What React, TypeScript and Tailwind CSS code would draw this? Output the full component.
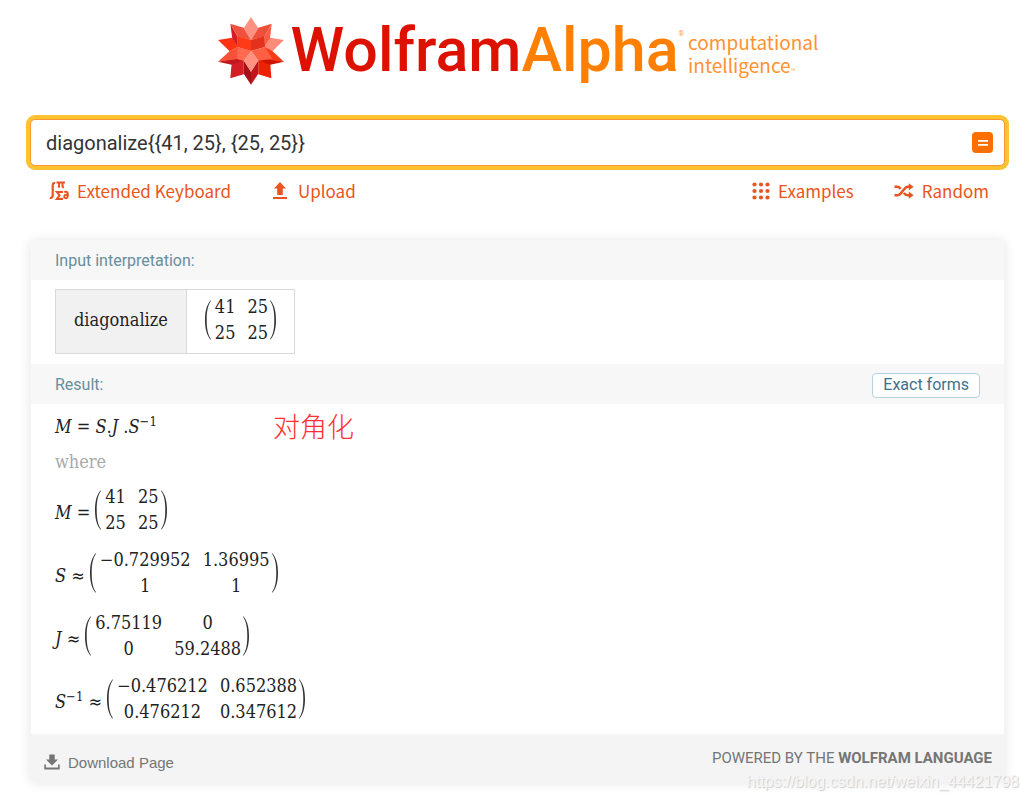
import React, { useState } from 'react';

interface MatrixProps {
  rows: string[][];
}

const Paren: React.FC<{ flip?: boolean }> = ({ flip }) => (
  <svg viewBox="0 0 6 40" className="w-1.5 h-10 shrink-0" fill="#333" aria-hidden="true">
    <path
      d={
        flip
          ? 'M0.2 0.3 C4 4 6 11 6 20 C6 29 4 36 0.2 39.7 L0 39.2 C3 35 4.3 29 4.3 20 C4.3 11 3 5 0 0.8 Z'
          : 'M5.8 0.3 C2 4 0 11 0 20 C0 29 2 36 5.8 39.7 L6 39.2 C3 35 1.7 29 1.7 20 C1.7 11 3 5 6 0.8 Z'
      }
    />
  </svg>
);

const Matrix: React.FC<MatrixProps> = ({ rows }) => (
  <span className="flex items-center">
    <Paren />
    <table className="text-[18px] leading-[26px] text-[#222]">
      <tbody>
        {rows.map((row, i) => (
          <tr key={i}>
            {row.map((cell, j) => (
              <td key={j} className={`p-0 text-center ${j === 0 ? 'pl-1 pr-1.5' : 'pl-1.5 pr-0.5'}`}>
                {cell}
              </td>
            ))}
          </tr>
        ))}
      </tbody>
    </table>
    <Paren flip />
  </span>
);

const Spikey = () => (
  <svg viewBox="18 15 204 207" className="w-[68px] h-[69px] shrink-0" aria-hidden="true">
    <path fill="#ff3311" d="M21 87 L63 80 L80 108 L56 121 Z" />
    <path fill="#ff8c7a" d="M219 87 L177 80 L160 108 L184 121 Z" />
    <path fill="#d51d26" d="M58 38 L80 77 L80 108 L64 84 Z" />
    <path fill="#f0523f" d="M58 38 L98 50 L120 86 L80 77 Z" />
    <path fill="#ff5c43" d="M182 38 L160 77 L160 108 L177 82 Z" />
    <path fill="#ef503c" d="M182 38 L142 50 L120 86 L160 77 Z" />
    <path fill="#ff9180" d="M120 18 L142 52 L120 88 L98 52 Z" />
    <path fill="#ff3b17" d="M80 76 L120 86 L120 120 L78 108 Z" />
    <path fill="#e5321e" d="M160 76 L120 86 L120 120 L162 108 Z" />
    <path fill="#d51d26" d="M58 202 L62 158 L98 145 L98 190 Z" />
    <path fill="#ec2204" d="M181 202 L178 158 L142 145 L142 190 Z" />
    <path fill="#c0181e" d="M21 152 L80 140 L98 148 L62 161 Z" />
    <path fill="#cf1406" d="M219 152 L160 140 L142 148 L178 161 Z" />
    <path fill="#fa5238" d="M21 152 L56 120 L80 108 L120 120 L98 149 L80 144 Z" />
    <path fill="#ff6a50" d="M80 108 L120 120 L98 149 L78 144 Z" />
    <path fill="#f53b18" d="M219 152 L184 120 L162 108 L160 144 Z" />
    <path fill="#ff6043" d="M162 108 L120 120 L142 149 L184 143 Z" />
    <path fill="#a81018" d="M98 148 L120 182 L120 221 L98 188 Z" />
    <path fill="#c3141a" d="M142 148 L120 182 L120 221 L142 188 Z" />
    <path fill="#ff9180" d="M120 120 L142 148 L120 182 L98 148 Z" />
  </svg>
);

const KeyboardIcon = () => (
  <svg viewBox="0 0 20 20" className="w-5 h-5" fill="none" stroke="#ea5420" aria-hidden="true">
    <path strokeWidth="2.2" d="M6.2 2.2 C4.2 1.6 3.7 2.8 3.7 4.5 V14 C3.7 16.4 2.8 17.4 0.8 16.8" />
    <path strokeWidth="2" d="M7.5 1.5 H16 M10 2 V6.8 M13.5 2 V5.6 Q13.6 6.4 15 6.2" />
    <path strokeWidth="2" d="M13 12 V10.9 H7.8 L10.6 14.4 L7.8 18 H13 V16.7" />
    <path strokeWidth="2" d="M15.2 11.2 C18 10 19 11.5 18.9 14 C18.8 16.4 17.8 17.3 16.5 17.1 C14.6 16.8 14.9 13.9 16.8 13.7 C17.8 13.6 18.5 14 18.8 14.6" />
  </svg>
);

const UploadIcon = () => (
  <svg viewBox="0 0 16 20" className="w-4 h-5" fill="#ea5420" aria-hidden="true">
    <path d="M8 1 L14 7.5 H10.8 V14 H5.2 V7.5 H2 Z M1 16 H15 V18 H1 Z" />
  </svg>
);

const ExamplesIcon = () => (
  <svg viewBox="0 0 18 18" className="w-[18px] h-[18px]" fill="#ea5420" aria-hidden="true">
    {[2.5, 9, 15.5].map((y) => [2.5, 9, 15.5].map((x) => <circle key={`${x}-${y}`} cx={x} cy={y} r="2.1" />))}
  </svg>
);

const RandomIcon = () => (
  <svg viewBox="0 0 20 16" className="w-5 h-4" fill="none" stroke="#ea5420" strokeWidth="2.5" aria-hidden="true">
    <path d="M0.5 12.2 H3.5 C8 12.2 9.5 3.8 14 3.8 H15.5 M0.5 3.8 H3 C4.6 3.8 5.7 4.6 6.7 5.8 M9.8 10 C10.8 11.4 12 12.2 14 12.2 H15.5" />
    <path fill="#ea5420" stroke="none" d="M14.8 0.2 L19.6 3.8 L14.8 7.4 Z M14.8 8.6 L19.6 12.2 L14.8 15.8 Z" />
  </svg>
);

const DownloadIcon = () => (
  <svg viewBox="0 0 16 16" className="w-4 h-4 mb-1" fill="#757575" aria-hidden="true">
    <path d="M5.3 0.5 H10.7 V5.5 H14 L8 11.5 L2 5.5 H5.3 Z M0.3 10.5 H2 V13.5 H14 V10.5 H15.7 V15.5 H0.3 Z" />
  </svg>
);

const linkClass = 'flex items-center gap-2 text-[#ea5420] text-[17px] leading-6 font-["Noto_Sans_CJK_SC",sans-serif]';
const mathClass = 'font-["DejaVu_Serif_Condensed","DejaVu_Serif",serif] text-[#222]';
const podHeadClass = 'flex items-center justify-between h-10 px-6 pt-0.5 bg-[#f7f7f7] text-[#678e9c] text-base';

const App: React.FC = () => {
  const [query, setQuery] = useState('diagonalize{{41, 25}, {25, 25}}');

  return (
    <div className="relative overflow-hidden bg-white pl-[30px] pr-[23px] pt-[15px] pb-[15px] font-[Roboto,sans-serif]">
      <header className="flex justify-center">
        <a href="#" className="flex items-center">
          <Spikey />
          <span className="ml-1.5 pt-px text-[61px] leading-[69px] font-medium text-[#dd1100]">
            Wolfram<span className="text-[#ff7f00]">Alpha</span>
          </span>
          <sup className="self-start mt-[18px] text-[7px] leading-2 text-[#ff9a45]">®</sup>
          <span className="ml-1 mt-3 flex flex-col text-[19px] leading-[23px] text-[#ff9233] font-['Noto_Sans_CJK_SC',sans-serif]">
            <span>computational</span>
            <span>
              intelligence<span className="text-[6px]">™</span>
            </span>
          </span>
        </a>
      </header>

      <form
        onSubmit={(e) => e.preventDefault()}
        className="mt-[34px] flex items-center h-[47px] pl-[15px] pr-[11px] rounded-[5px] border border-[#ff9432] ring-4 ring-[#ffc230] bg-white"
      >
        <input
          aria-label="Query"
          value={query}
          onChange={(e) => setQuery(e.target.value)}
          className="flex-1 min-w-0 text-xl leading-7 text-[#333] outline-none"
        />
        <button type="submit" aria-label="Compute" className="flex items-center justify-center w-[21px] h-[21px] rounded-sm bg-[#ff6f00]">
          <svg viewBox="0 0 12 8" className="w-3 h-2" fill="#fff" aria-hidden="true">
            <path d="M1 1 H11 V2.8 H1 Z M1 5 H11 V6.8 H1 Z" />
          </svg>
        </button>
      </form>

      <nav className="mt-[13px] flex justify-between pl-[19px] pr-4">
        <div className="flex gap-[41px]">
          <button type="button" className={linkClass}><KeyboardIcon />Extended Keyboard</button>
          <button type="button" className={linkClass}><UploadIcon /><span className="pl-0.5">Upload</span></button>
        </div>
        <div className="flex gap-10">
          <a href="#" className={linkClass}><ExamplesIcon />Examples</a>
          <a href="#" className={linkClass}><RandomIcon />Random</a>
        </div>
      </nav>

      <main className="mt-[37px] rounded-md overflow-hidden bg-white border-x border-[#f4f4f4] shadow-[0_0_12px_rgba(0,0,0,0.1)]">
        <section>
          <h2 className={podHeadClass}>Input interpretation:</h2>
          <div className="pl-6 pt-[9px] pb-[10px]">
            <div className={`inline-flex h-[65px] border border-[#d9d9d9] align-top ${mathClass}`}>
              <span className="flex items-center px-[18px] pb-1 bg-[#f1f1f1] border-r border-[#d9d9d9] text-[18px]">diagonalize</span>
              <span className="flex items-start px-[18px] pt-1">
                <Matrix rows={[['41', '25'], ['25', '25']]} />
              </span>
            </div>
          </div>
        </section>

        <section>
          <div className={podHeadClass}>
            <h2>Result:</h2>
            <button type="button" className="h-[25px] px-2.5 rounded border border-[#b4d3de] bg-white text-[#3c7289] text-base leading-[22px]">
              Exact forms
            </button>
          </div>
          <div className={`pl-6 pt-2 pb-[9px] text-[18px] ${mathClass}`}>
            <div className="flex items-center h-7">
              <p className="w-[218px]">
                <i>M</i> = <i>S</i>.<i>J</i> .<i>S</i>
                <sup className="text-[13px]">−1</sup>
              </p>
              <span className="text-[27px] leading-7 font-light text-[#ff3030] font-['Noto_Sans_CJK_SC',sans-serif]">对角化</span>
            </div>
            <p className="mt-2 text-[18px] leading-7 text-[#aaa]">where</p>
            <div className="mt-2 flex flex-col gap-[11px]">
              <div className="flex items-center gap-[5px]">
                <span className="pt-1"><i>M</i> =</span>
                <Matrix rows={[['41', '25'], ['25', '25']]} />
              </div>
              <div className="flex items-center gap-[5px]">
                <span className="pt-1"><i>S</i> ≈</span>
                <Matrix rows={[['−0.729952', '1.36995'], ['1', '1']]} />
              </div>
              <div className="flex items-center gap-[5px]">
                <span className="pt-1"><i>J</i> ≈</span>
                <Matrix rows={[['6.75119', '0'], ['0', '59.2488']]} />
              </div>
              <div className="flex items-center gap-[5px]">
                <span className="pt-1"><i>S</i><sup className="text-[13px]">−1</sup> ≈</span>
                <Matrix rows={[['−0.476212', '0.652388'], ['0.476212', '0.347612']]} />
              </div>
            </div>
          </div>
        </section>

        <footer className="flex items-center justify-between h-[49px] pl-[13px] pr-3 bg-[#f4f4f4] text-[#757575]">
          <a href="#" className="flex items-center gap-2 pt-2.5 text-[15px] font-['Liberation_Sans',sans-serif]">
            <DownloadIcon />
            Download Page
          </a>
          <p className="text-[15px]">
            POWERED BY THE <a href="#" className="font-bold">WOLFRAM LANGUAGE</a>
          </p>
        </footer>
      </main>

      <span className="absolute right-[9px] bottom-1 text-base leading-6 text-[#f6f6f6] [text-shadow:1px_1px_1px_#ccc] font-['Liberation_Sans',sans-serif]">
        https://blog.csdn.net/weixin_44421798
      </span>
    </div>
  );
};

export default App;
